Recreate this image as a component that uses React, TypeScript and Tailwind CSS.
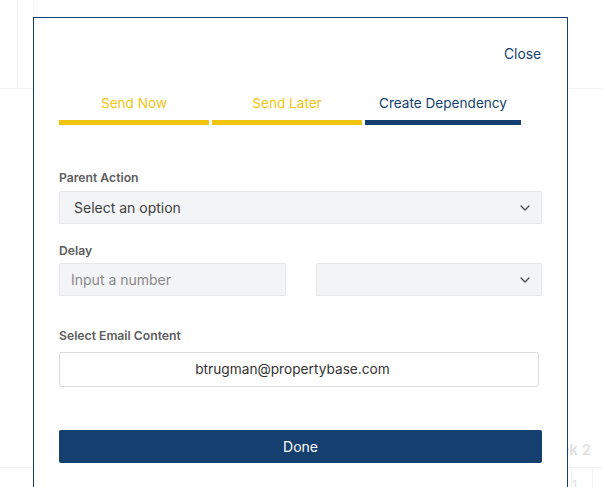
import React from 'react';

const NAVY = 'text-[#143f6e]';

const Chevron: React.FC = () => (
  <svg width="10" height="6" viewBox="0 0 10 6" className="shrink-0">
    <polyline points="1,1 5,5 9,1" fill="none" stroke="#4b4b4b" strokeWidth="1.3" strokeLinecap="round" strokeLinejoin="round" />
  </svg>
);

interface TabProps {
  label: string;
  width: string;
  active?: boolean;
}

const Tab: React.FC<TabProps> = ({ label, width, active }) => (
  <div className={`flex flex-col ${width}`}>
    <div className={`h-5 text-center text-[13.6px] leading-5 ${active ? NAVY : 'text-[#f2c514]'}`}>{label}</div>
    <div className={`mt-[7px] h-[5px] ${active ? 'bg-[#143f6e]' : 'bg-[#f1c40f]'}`} />
  </div>
);

const FieldLabel: React.FC<{ children: React.ReactNode }> = ({ children }) => (
  <div className="h-4 text-[12.2px] font-semibold leading-4 text-[#5c5c5c]">{children}</div>
);

export default function App() {
  return (
    <div
      className="relative h-[487px] w-[603px] overflow-hidden bg-white"
      style={{ fontFamily: 'Inter, Roboto, "Liberation Sans", sans-serif' }}
    >
      {/* page behind the modal */}
      <div className="flex h-[89px] border-b border-[#f3f3f3]">
        <div className="w-[18px] border-r border-[#f1f1f1]" />
        <div className="w-[15px]" />
        <div className="flex-1 border-l border-[#f6f6f6]" />
      </div>
      <div className="flex justify-end pr-[12px] pt-[351px]">
        <span className="text-[15px] font-semibold leading-5 text-[#e0e0e0]">Week 2</span>
      </div>
      <div className="mt-[7px] flex h-[30px] justify-end border-t border-[#f3f3f3]">
        <div className="w-[22px] border-l border-r border-[#f1f1f1] pt-[8px] text-[13px] text-[#e0e0e0]">1</div>
        <div className="w-[10px]" />
      </div>

      {/* modal */}
      <div className="absolute left-[33px] top-[17px] h-[480px] w-[535px] border border-b-0 border-[#143f6e] bg-white px-[25px] pt-[26px]">
        <div className="flex justify-end pr-px">
          <span className={`text-[13.8px] leading-5 ${NAVY}`}>Close</span>
        </div>

        <div className="mt-[29px] flex gap-[3px]">
          <Tab label="Send Now" width="w-[150px]" />
          <Tab label="Send Later" width="w-[150px]" />
          <Tab label="Create Dependency" width="w-[156px]" active />
        </div>

        <div className="mt-[45px]">
          <FieldLabel>Parent Action</FieldLabel>
          <div className="mt-[5px] flex h-[33px] items-center justify-between rounded-[2px] border border-[#e6e7e9] bg-[#f3f4f6] pl-[14px] pr-[11px]">
            <span className="text-[14px] text-[#3f3f3f]">Select an option</span>
            <Chevron />
          </div>
        </div>

        <div className="mt-[19px]">
          <FieldLabel>Delay</FieldLabel>
          <div className="mt-[4px] grid grid-cols-2 gap-[30px]">
            <div className="flex h-[33px] items-center rounded-[2px] border border-[#e6e7e9] bg-[#f3f4f6] pl-[11px]">
              <span className="text-[14px] text-[#8a8a8a]">Input a number</span>
            </div>
            <div className="flex h-[33px] items-center justify-end rounded-[2px] border border-[#e6e7e9] bg-[#f3f4f6] pr-[11px]">
              <Chevron />
            </div>
          </div>
        </div>

        <div className="mt-[32px]">
          <FieldLabel>Select Email Content</FieldLabel>
          <div className="mt-[8px] flex h-[35px] w-[480px] items-center justify-center rounded-[3px] border border-[#dcdcdc] bg-white pr-[13px]">
            <span className="text-[13.7px] text-[#333333]">btrugman@propertybase.com</span>
          </div>
        </div>

        <button className="mt-[43px] flex h-[33px] w-full items-center justify-center rounded-[2px] bg-[#143f6e] text-[14px] text-white">
          Done
        </button>
      </div>
    </div>
  );
}
